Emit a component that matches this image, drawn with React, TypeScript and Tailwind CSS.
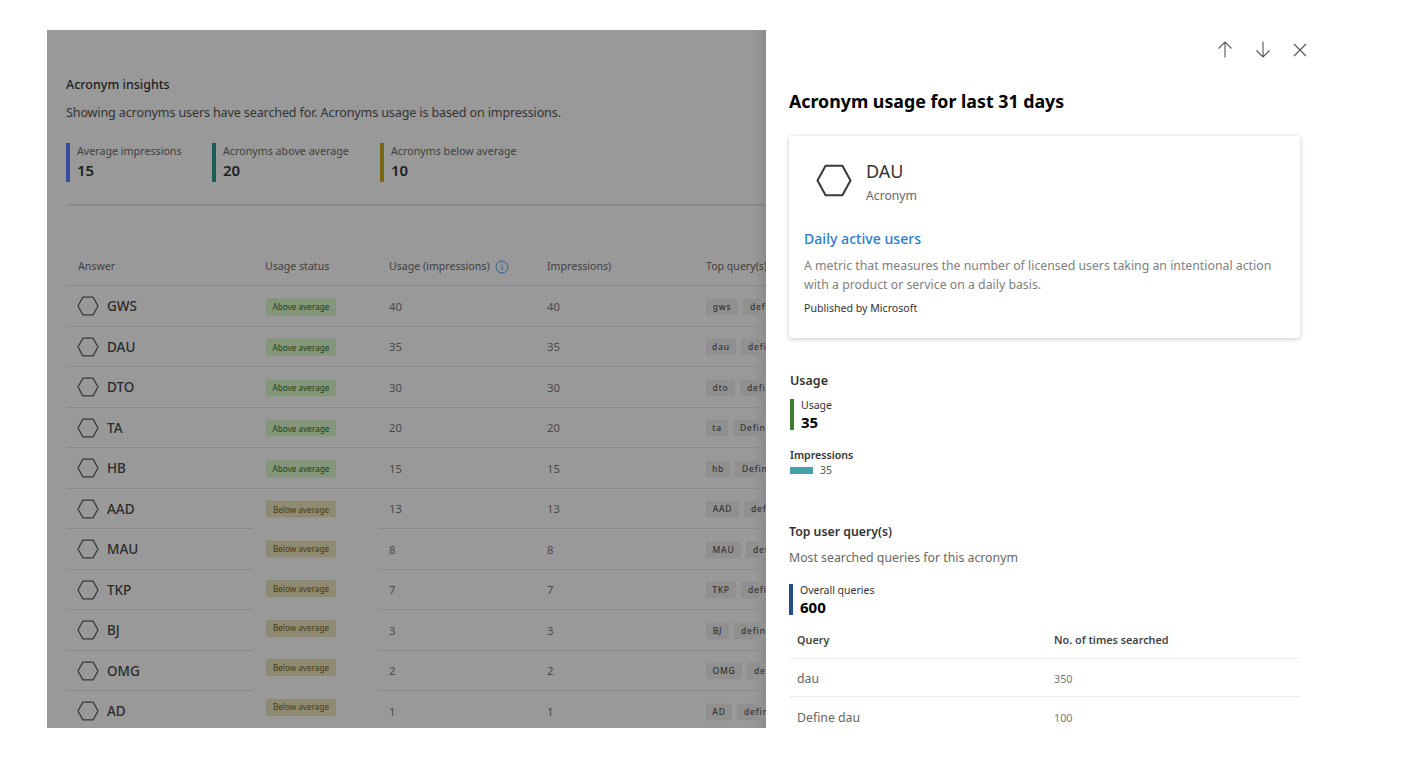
import React from "react";

const Hex = ({ className, sw = 1.5 }: { className: string; sw?: number }) => (
  <svg viewBox="0 0 24 22" className={className} fill="none" stroke="currentColor" strokeWidth={sw} strokeLinejoin="round">
    <path d="M6.4 1.2h11.2L23 11l-5.4 9.8H6.4L1 11z" />
  </svg>
);

type Row = { name: string; v: number; tag: string; next: string; above: boolean; tw: string; off: string };
const rows: Row[] = [
  { name: "GWS", v: 40, tag: "gws", next: "define", above: true, tw: "w-[32px]", off: "translate-y-[0.5px]" },
  { name: "DAU", v: 35, tag: "dau", next: "define", above: true, tw: "w-[30px]", off: "translate-y-[0.5px]" },
  { name: "DTO", v: 30, tag: "dto", next: "define", above: true, tw: "w-[29px]", off: "translate-y-[0.5px]" },
  { name: "TA", v: 20, tag: "ta", next: "Define", above: true, tw: "w-[22px]", off: "translate-y-[0.5px]" },
  { name: "HB", v: 15, tag: "hb", next: "Define", above: true, tw: "w-[24px]", off: "translate-y-[0.5px]" },
  { name: "AAD", v: 13, tag: "AAD", next: "define", above: false, tw: "w-[33px]", off: "translate-y-[0.5px]" },
  { name: "MAU", v: 8, tag: "MAU", next: "define", above: false, tw: "w-[35px]", off: "-translate-y-[0.5px]" },
  { name: "TKP", v: 7, tag: "TKP", next: "define", above: false, tw: "w-[30px]", off: "-translate-y-[1px]" },
  { name: "BJ", v: 3, tag: "BJ", next: "define", above: false, tw: "w-[23px]", off: "-translate-y-[2px]" },
  { name: "OMG", v: 2, tag: "OMG", next: "define", above: false, tw: "w-[36px]", off: "-translate-y-[3px]" },
  { name: "AD", v: 1, tag: "AD", next: "define", above: false, tw: "w-[26px]", off: "-translate-y-[4px]" },
];

const Stat = ({ label, value, bar, className }: { label: string; value: string; bar: string; className: string }) => (
  <div className={`flex h-[39px] ${className}`}>
    <div className={`w-[4px] h-full shrink-0 ${bar}`} />
    <div className="pl-[7px] flex flex-col">
      <span className="text-[10.7px] leading-[16px] text-[#3f3f3f] whitespace-nowrap">{label}</span>
      <span className="text-[15px] leading-[23px] font-semibold text-[#1f1f1f]">{value}</span>
    </div>
  </div>
);

const PanelStat = ({ label, value, bar, className }: { label: string; value: string; bar: string; className: string }) => (
  <div className={`flex h-[31px] ${className}`}>
    <div className={`w-[4px] h-full shrink-0 ${bar}`} />
    <div className="pl-[7px] flex flex-col">
      <span className="text-[10.5px] leading-[12px] text-[#333] whitespace-nowrap">{label}</span>
      <span className="text-[15px] leading-[22px] font-bold text-black">{value}</span>
    </div>
  </div>
);

const UpIcon = () => (
  <svg viewBox="0 0 16 17" className="w-[16px] h-[17px]" fill="none" stroke="currentColor" strokeWidth="1.1">
    <path d="M8 16.5V1M1.5 7.5 8 1l6.5 6.5" />
  </svg>
);
const DownIcon = () => (
  <svg viewBox="0 0 16 17" className="w-[16px] h-[17px]" fill="none" stroke="currentColor" strokeWidth="1.1">
    <path d="M8 .5V16M1.5 9.5 8 16l6.5-6.5" />
  </svg>
);
const CloseIcon = () => (
  <svg viewBox="0 0 14 14" className="w-[14px] h-[14px]" fill="none" stroke="currentColor" strokeWidth="1.1">
    <path d="M1 1l12 12M13 1 1 13" />
  </svg>
);

export default function App() {
  return (
    <div className="w-[1408px] h-[774px] bg-white overflow-hidden pt-[30px] pl-[47px] flex items-start text-[#242424] [font-family:'Noto_Sans',sans-serif]">
      <main className="relative w-[719px] h-[698px] shrink-0 bg-[#999999] overflow-hidden pt-[46px] pl-[19px]">
        <div className="absolute right-0 top-0 bottom-0 w-[12px] bg-gradient-to-r from-transparent to-[#00000016]" />
        <h2 className="text-[12.5px] leading-[18px] font-medium text-[#1d1d1d]">Acronym insights</h2>
        <p className="mt-[10px] text-[12.6px] tracking-[-0.15px] leading-[18px] text-[#333] whitespace-nowrap">
          Showing acronyms users have searched for. Acronyms usage is based on impressions.
        </p>
        <div className="flex mt-[21px]">
          <Stat className="w-[146px]" label="Average impressions" value="15" bar="bg-[#3a4a9b]" />
          <Stat className="w-[168px]" label="Acronyms above average" value="20" bar="bg-[#1f5c58]" />
          <Stat className="w-[180px]" label="Acronyms below average" value="10" bar="bg-[#7d6516]" />
        </div>
        <div className="h-[2px] bg-[#8a8a8a] mt-[22px] w-[700px]" />
        <div className="flex items-center h-[80px] pt-[43px] text-[10.6px] text-[#3f3f3f] border-b border-[#8b8b8b] w-[700px]">
          <span className="w-[199px] shrink-0 pl-[12px]">Answer</span>
          <span className="w-[124px] shrink-0">Usage status</span>
          <span className="w-[158px] shrink-0 flex items-center gap-[5px]">
            Usage (impressions)
            <svg viewBox="0 0 16 16" className="w-[14px] h-[14px] text-[#2d5f96]" fill="none" stroke="currentColor" strokeWidth="1.1">
              <circle cx="8" cy="8" r="6.8" />
              <path d="M8 7v4.5M8 4.4v1.1" />
            </svg>
          </span>
          <span className="w-[159px] shrink-0">Impressions)</span>
          <span className="whitespace-nowrap">Top query(s)</span>
        </div>
        {rows.map((r) => (
          <div key={r.name} className="relative flex items-center h-[40.5px] w-[700px]">
            <div className="w-[199px] shrink-0 flex items-center pl-[11px] gap-[8px] h-full">
              <Hex className="w-[22px] h-[20px] text-[#3a3a3a] shrink-0" sw={1.4} />
              <span className="text-[13.5px] font-medium text-[#2b2b2b]">{r.name}</span>
            </div>
            <div className="w-[124px] shrink-0">
              <span
                className={`ml-[1px] flex items-center justify-center w-[70px] h-[17px] rounded-[1px] text-[8.2px] ${r.off} ${
                  r.above ? "bg-[#84967a] text-[#223f10]" : "bg-[#8f8a72] text-[#46390c]"
                }`}
              >
                {r.above ? "Above average" : "Below average"}
              </span>
            </div>
            <span className="w-[158px] shrink-0 text-[11.3px] text-[#4a4a4a] translate-y-[1px]">{r.v}</span>
            <span className="w-[159px] shrink-0 text-[11.3px] text-[#4a4a4a] translate-y-[1px]">{r.v}</span>
            <div className="flex gap-[5px] w-[60px] overflow-hidden shrink-0 translate-y-[0.5px]">
              <span className={`h-[17px] ${r.tw} shrink-0 flex items-center justify-center bg-[#909090] text-[8.5px] font-medium tracking-[0.8px] text-[#333] rounded-[1px]`}>
                {r.tag}
              </span>
              <span className="h-[17px] px-[7px] shrink-0 flex items-center bg-[#909090] text-[8.5px] font-medium tracking-[0.8px] text-[#333] rounded-[1px]">
                {r.next}
              </span>
            </div>
            {r.above ? (
              <div className="absolute left-0 right-0 bottom-0 h-[1px] bg-[#8b8b8b]" />
            ) : (
              <>
                <div className="absolute left-0 w-[187px] bottom-0 h-[1px] bg-[#8b8b8b]" />
                <div className="absolute left-[312px] right-0 bottom-0 h-[1px] bg-[#8b8b8b]" />
              </>
            )}
          </div>
        ))}
      </main>

      <aside className="w-[564px] h-[698px] shrink-0 bg-white overflow-hidden pl-[23px] pr-[30px]">
        <div className="flex justify-end items-center gap-[22px] -mr-[7px] h-[39px] text-[#555]">
          <UpIcon />
          <DownIcon />
          <CloseIcon />
        </div>
        <h1 className="mt-[20px] text-[17.8px] leading-[24px] font-bold text-black whitespace-nowrap">Acronym usage for last 31 days</h1>
        <section className="mt-[23px] w-[511px] h-[202px] rounded-[3px] shadow-[0_1px_5px_rgba(0,0,0,0.22)] pt-[24px] px-[15px]">
          <div className="flex">
            <Hex className="w-[36px] h-[33px] ml-[12px] mt-[4px] text-[#3a3a3a]" sw={1.35} />
            <div className="ml-[14px] -mt-[2px]">
              <div className="text-[18px] leading-[26px] text-[#333]">DAU</div>
              <div className="text-[12.2px] leading-[20px] text-[#666] mt-[2px]">Acronym</div>
            </div>
          </div>
          <div className="mt-[23px] text-[14.1px] leading-[20px] text-[#2b7cd3] font-medium">Daily active users</div>
          <p className="mt-[7px] text-[12.3px] leading-[19px] text-[#808080] w-[480px]">
            A metric that measures the number of licensed users taking an intentional action with a product or service on a daily basis.
          </p>
          <div className="mt-[6px] text-[10.6px] leading-[16px] text-[#333]">Published by Microsoft</div>
        </section>
        <div className="ml-[1px]">
          <h3 className="mt-[34px] text-[12.5px] leading-[18px] font-semibold text-[#333]">Usage</h3>
          <PanelStat className="mt-[9px]" label="Usage" value="35" bar="bg-[#3f7d2e]" />
          <div className="mt-[18px] text-[10.6px] leading-[14px] font-semibold text-[#333]">Impressions</div>
          <div className="flex items-center gap-[7px] mt-[1px]">
            <div className="w-[23px] h-[7px] bg-[#45a0ac]" />
            <span className="text-[10.5px] leading-[14px] text-[#555]">35</span>
          </div>
        </div>
        <h3 className="mt-[46px] text-[12.3px] leading-[18px] font-semibold text-[#333]">Top user query(s)</h3>
        <p className="mt-[8px] text-[12.3px] leading-[18px] text-[#666]">Most searched queries for this acronym</p>
        <PanelStat className="mt-[17px]" label="Overall queries" value="600" bar="bg-[#1f4e8c]" />
        <div className="w-[511px] mt-[9px] text-[10.8px]">
          <div className="flex items-center h-[35px] pb-[1px] border-b border-[#ededed] font-semibold text-[#444]">
            <span className="w-[265px] shrink-0 pl-[8px]">Query</span>
            <span>No. of times searched</span>
          </div>
          <div className="flex items-center h-[38px] pt-[4px] border-b border-[#ededed]">
            <span className="w-[265px] shrink-0 pl-[8px] text-[12.3px] text-[#666]">dau</span>
            <span className="text-[#777]">350</span>
          </div>
          <div className="flex items-center h-[42px]">
            <span className="w-[265px] shrink-0 pl-[8px] text-[12.3px] text-[#666]">Define dau</span>
            <span className="text-[#777]">100</span>
          </div>
        </div>
      </aside>
    </div>
  );
}
